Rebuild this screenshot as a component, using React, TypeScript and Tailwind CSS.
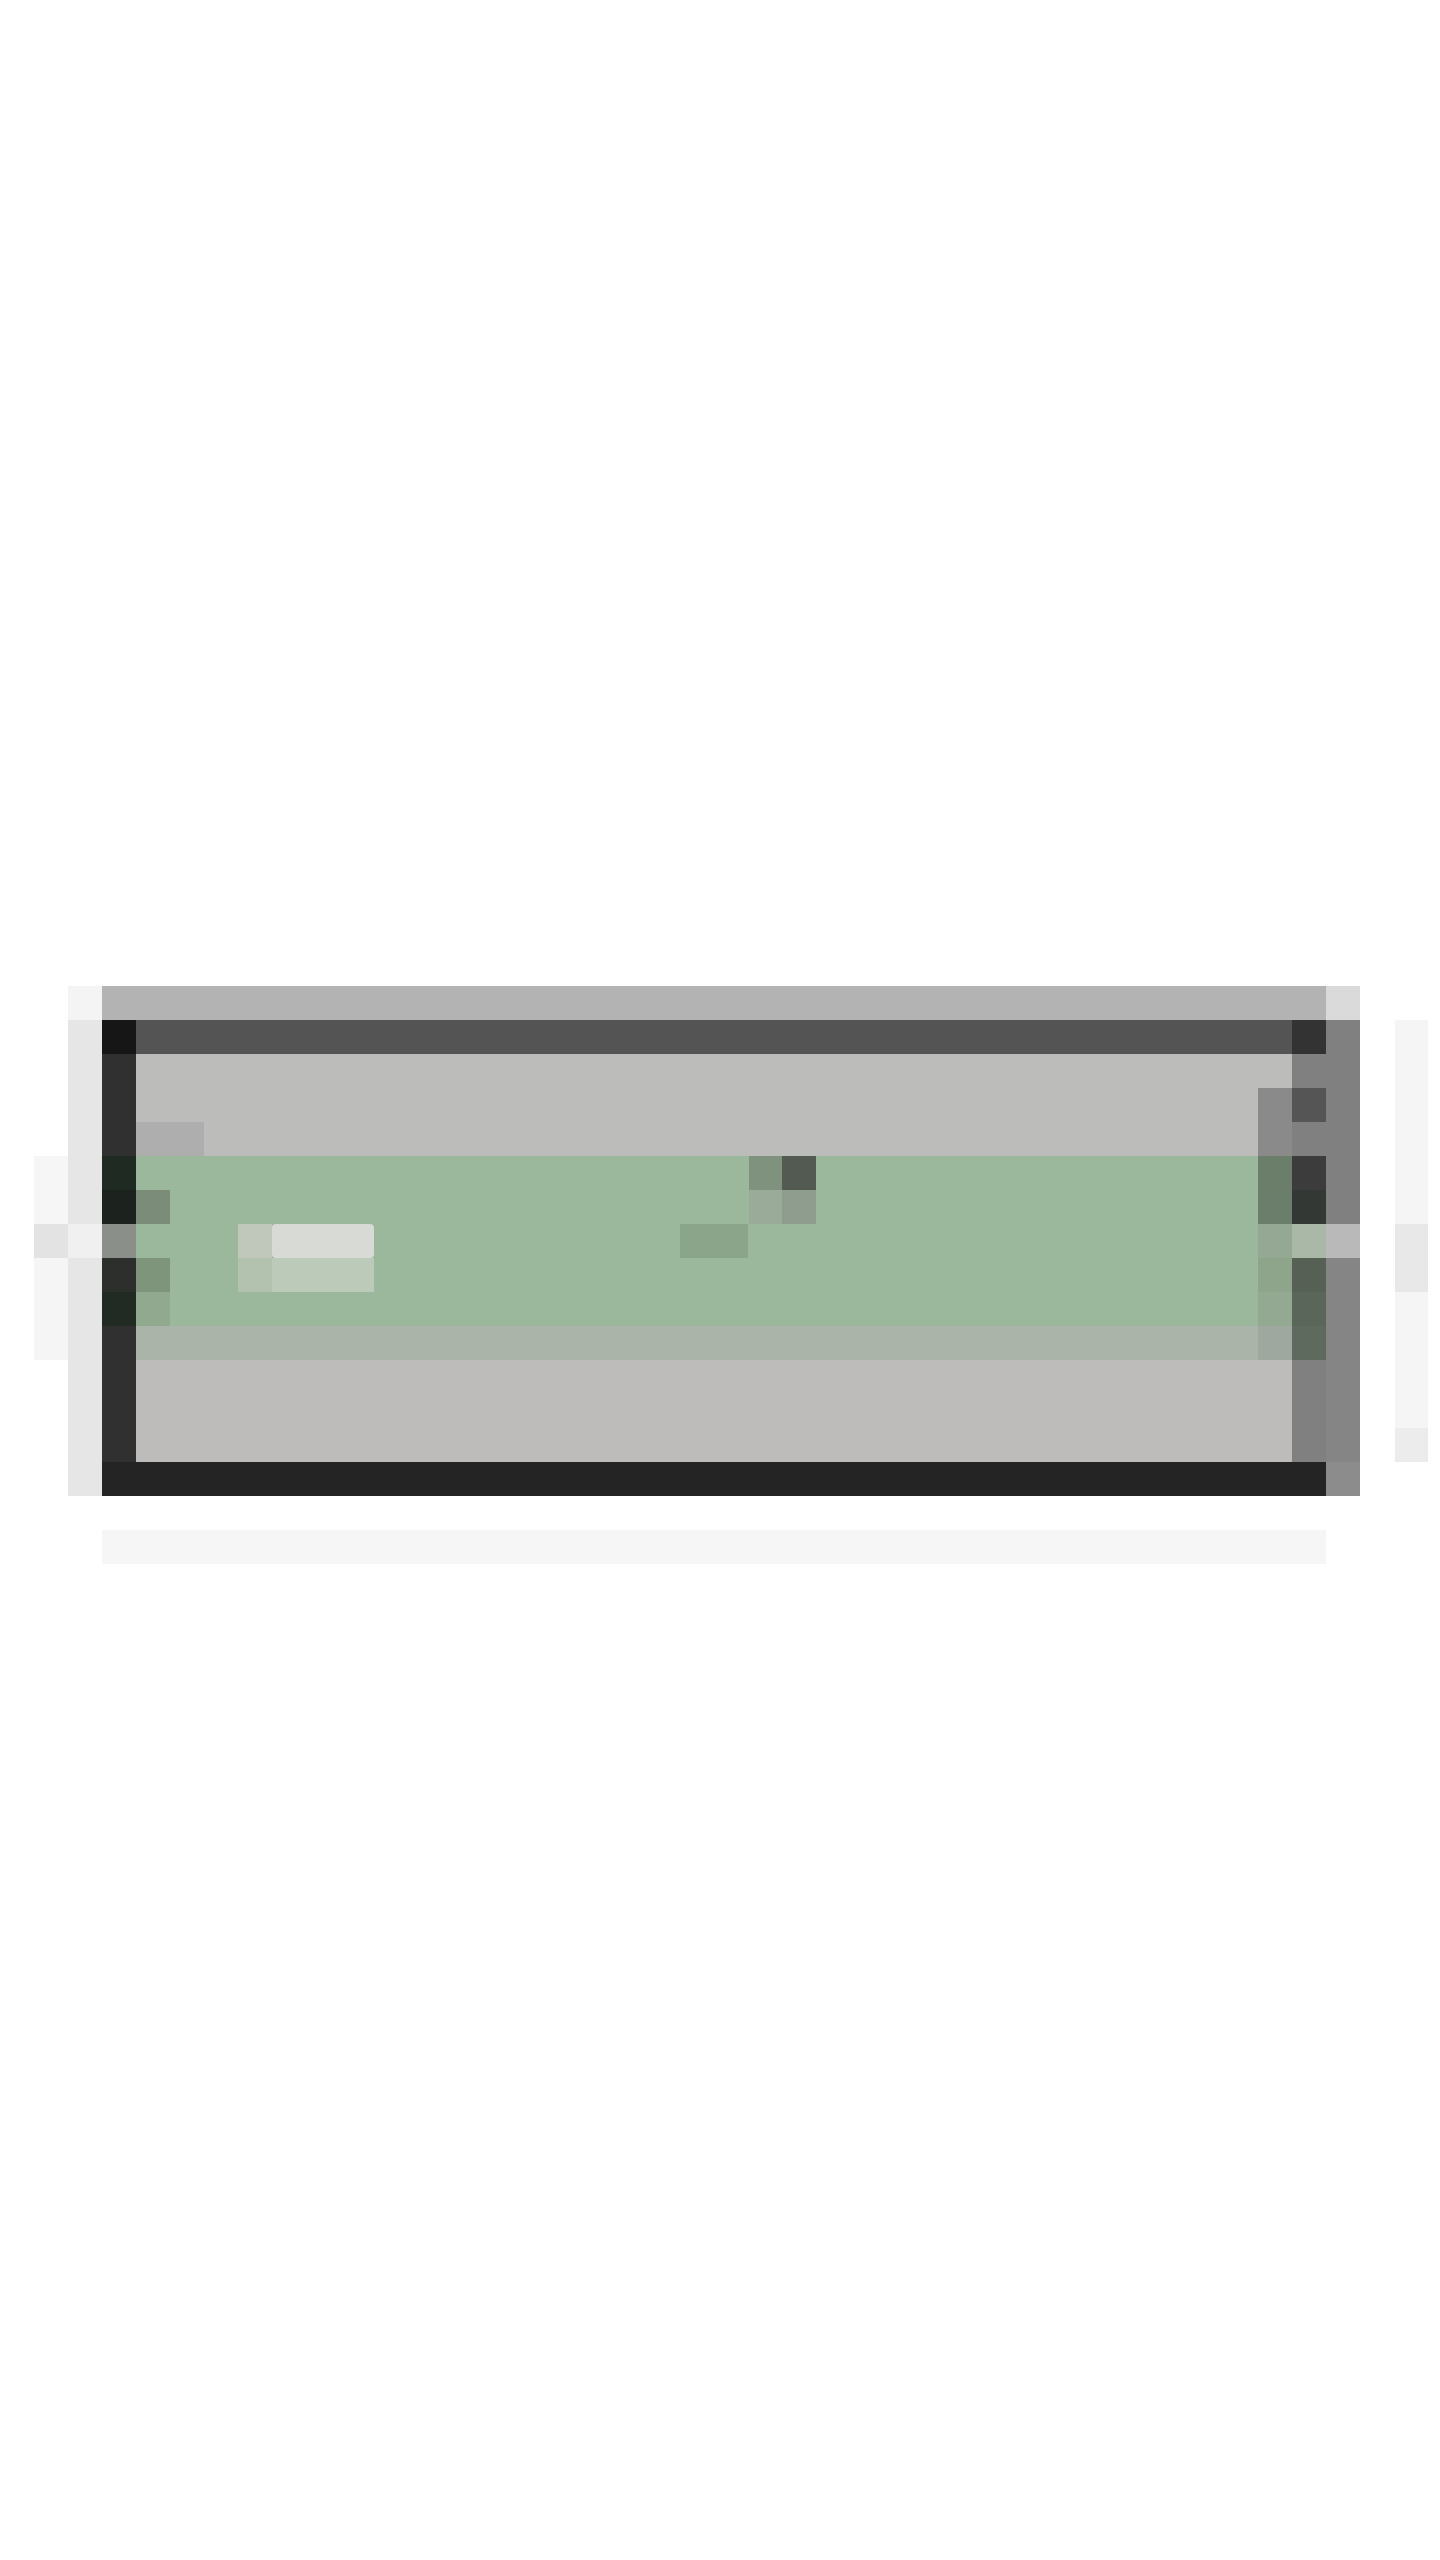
export default function App() {
  return (
    <div className="min-h-[2560px] bg-white pt-[986px]">
      <div className="flex">
        {/* soft outer glow */}
        <div className="ml-[34px] flex w-[34px] flex-col pt-[170px]">
          <div className="h-[68px] bg-[#f6f6f6]" />
          <div className="h-[34px] bg-[#e3e3e3]" />
          <div className="h-[102px] bg-[#f5f5f5]" />
        </div>

        {/* left shadow */}
        <div className="flex w-[34px] flex-col">
          <div className="h-[34px] bg-[#f4f4f4]" />
          <div className="h-[204px] bg-[#e6e6e6]" />
          <div className="h-[34px] bg-[#f0f0f0]" />
          <div className="h-[238px] bg-[#e6e6e6]" />
        </div>

        {/* panel */}
        <section className="flex w-[1224px] flex-col">
          <div className="h-[34px] bg-[#b3b3b3]" />
          <header className="flex h-[34px]">
            <div className="w-[34px] bg-[#161616]" />
            <div className="flex-1 bg-[#545454]" />
            <div className="w-[34px] bg-[#333333]" />
          </header>

          <div className="flex">
            {/* left border */}
            <div className="flex w-[34px] flex-col">
              <div className="h-[102px] bg-[#303030]" />
              <div className="h-[34px] bg-[#1f2a22]" />
              <div className="h-[34px] bg-[#1c221e]" />
              <div className="h-[34px] bg-[#8a8f8a]" />
              <div className="h-[34px] bg-[#2c2f2c]" />
              <div className="h-[34px] bg-[#222a24]" />
              <div className="h-[136px] bg-[#303030]" />
            </div>

            <main className="flex flex-1 flex-col bg-[#bcbcba]">
              <div className="flex h-[68px]">
                <div className="flex-1" />
                <div className="flex w-[34px] flex-col">
                  <div className="h-[34px]" />
                  <div className="h-[34px] bg-[#8a8a8a]" />
                </div>
              </div>
              <div className="flex h-[34px]">
                <div className="w-[68px] bg-[#aeaeae]" />
                <div className="flex-1" />
                <div className="w-[34px] bg-[#8a8a8a]" />
              </div>

              {/* status banner */}
              <div className="flex flex-col bg-[#9cb89c]">
                <div className="flex h-[34px]">
                  <div className="w-[613px]" />
                  <div className="w-[33px] bg-[#7e927e]" />
                  <div className="w-[34px] bg-[#525a52]" />
                  <div className="flex-1" />
                  <div className="w-[34px] bg-[#6a7e6a]" />
                </div>
                <div className="flex h-[34px]">
                  <div className="w-[34px] bg-[#7b8d79]" />
                  <div className="w-[579px]" />
                  <div className="w-[33px] bg-[#9aab9a]" />
                  <div className="w-[34px] bg-[#8e9d8e]" />
                  <div className="flex-1" />
                  <div className="w-[34px] bg-[#6b7e6b]" />
                </div>
                <div className="flex h-[34px]">
                  <div className="w-[102px]" />
                  <div className="w-[34px] bg-[#bfc8bb]" />
                  <div className="w-[102px] rounded-sm bg-[#d8dad6]" />
                  <div className="w-[306px]" />
                  <div className="w-[68px] bg-[#8aa58a]" />
                  <div className="flex-1" />
                  <div className="w-[34px] bg-[#95a894]" />
                </div>
                <div className="flex h-[34px]">
                  <div className="w-[34px] bg-[#7e957c]" />
                  <div className="w-[68px]" />
                  <div className="w-[34px] bg-[#b3c2af]" />
                  <div className="w-[102px] bg-[#bccab9]" />
                  <div className="flex-1" />
                  <div className="w-[34px] bg-[#8ea58c]" />
                </div>
                <div className="flex h-[34px]">
                  <div className="w-[34px] bg-[#91a98e]" />
                  <div className="flex-1" />
                  <div className="w-[34px] bg-[#93a991]" />
                </div>
              </div>
              <div className="flex h-[34px] bg-[#abb4a9]">
                <div className="flex-1" />
                <div className="w-[34px] bg-[#9fa89f]" />
              </div>
              <div className="h-[102px] bg-[#bdbcbb]" />
            </main>

            {/* right border */}
            <div className="flex w-[34px] flex-col">
              <div className="h-[34px] bg-[#808080]" />
              <div className="h-[34px] bg-[#555555]" />
              <div className="h-[34px] bg-[#808080]" />
              <div className="h-[34px] bg-[#3c3c3c]" />
              <div className="h-[34px] bg-[#343834]" />
              <div className="h-[34px] bg-[#a9b8a7]" />
              <div className="h-[34px] bg-[#566054]" />
              <div className="h-[34px] bg-[#5a665a]" />
              <div className="h-[34px] bg-[#5e6a5e]" />
              <div className="h-[102px] bg-[#808080]" />
            </div>
          </div>

          <footer className="h-[34px] bg-[#242424]" />
        </section>

        {/* right shadow */}
        <div className="flex w-[34px] flex-col">
          <div className="h-[34px] bg-[#dadada]" />
          <div className="h-[204px] bg-[#808080]" />
          <div className="h-[34px] bg-[#b9b9b9]" />
          <div className="h-[204px] bg-[#858585]" />
          <div className="h-[34px] bg-[#8c8c8c]" />
        </div>

        <div className="ml-[35px] flex w-[33px] flex-col pt-[34px]">
          <div className="h-[204px] bg-[#f5f5f5]" />
          <div className="h-[68px] bg-[#e8e8e8]" />
          <div className="h-[136px] bg-[#f5f5f5]" />
          <div className="h-[34px] bg-[#ececec]" />
        </div>
      </div>

      <div className="ml-[102px] mt-[34px] h-[34px] w-[1224px] bg-[#f6f6f6]" />
    </div>
  )
}
